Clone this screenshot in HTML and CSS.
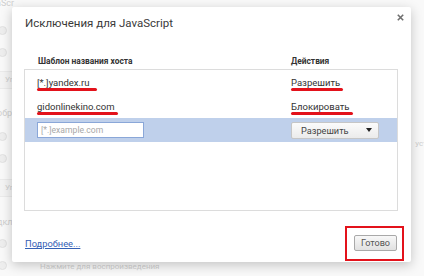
FILE: index.html
```html
<!DOCTYPE html>
<html lang="ru">
<head>
    <meta charset="UTF-8">
    <title>Исключения для JavaScript</title>
    <link rel="stylesheet" href="styles.css">
</head>
<body>
    <div class="page">
        <div class="page-col">
            <div class="page-item top">aScr</div>
            <div class="page-item"><span class="radio"></span></div>
            <div class="page-item"><span class="radio"></span></div>
            <div class="page-item btn-row"><span class="page-btn">Уг</span></div>
            <div class="page-item head">обр</div>
            <div class="page-item"><span class="radio"></span></div>
            <div class="page-item"><span class="radio"></span></div>
            <div class="page-item btn-row tall"><span class="page-btn">Уг</span></div>
            <div class="page-item head short">дкл</div>
            <div class="page-item"><span class="radio"></span></div>
            <div class="page-item"><span class="radio"></span><span class="page-text">Нажмите для воспроизведения</span></div>
        </div>
        <div class="page-side">уст</div>
    </div>

    <div class="dialog">
        <div class="dialog-header">
            <h1 class="dialog-title">Исключения для JavaScript</h1>
            <svg class="close" width="7" height="7" viewBox="0 0 7 7">
                <path d="M0.8 0.8 L6.2 6.2 M6.2 0.8 L0.8 6.2" stroke="#6f6f6f" stroke-width="1.6" fill="none"/>
            </svg>
        </div>

        <div class="columns">
            <div class="col-host">Шаблон названия хоста</div>
            <div class="col-action">Действия</div>
        </div>

        <div class="list">
            <div class="list-row">
                <div class="col-host"><span class="marked long">[*.]yandex.ru</span></div>
                <div class="col-action"><span class="marked">Разрешить</span></div>
            </div>
            <div class="list-row">
                <div class="col-host"><span class="marked">gidonlinekino.com</span></div>
                <div class="col-action"><span class="marked">Блокировать</span></div>
            </div>
            <div class="list-row selected">
                <div class="col-host"><input class="host-input" type="text" placeholder="[*.]example.com"></div>
                <div class="col-action">
                    <div class="select">
                        <span>Разрешить</span>
                        <svg width="6" height="4" viewBox="0 0 6 4"><path d="M0 0 H6 L3 4 Z" fill="#222"/></svg>
                    </div>
                </div>
            </div>
        </div>

        <div class="dialog-footer">
            <a href="#" class="more">Подробнее...</a>
            <div class="done-wrap">
                <button class="done">Готово</button>
            </div>
        </div>
    </div>
</body>
</html>
```

FILE: styles.css
```css
* {
    margin: 0;
    padding: 0;
    box-sizing: border-box;
}

body {
    width: 424px;
    height: 276px;
    overflow: hidden;
    background: #f9f9f9;
    font-family: Roboto, 'Noto Sans', sans-serif;
}

/* faded settings page behind the overlay */
.page {
    display: flex;
    justify-content: space-between;
    color: #cfcfcf;
    font-size: 8px;
}

.page-col {
    display: flex;
    flex-direction: column;
}

.page-item {
    height: 22px;
    display: flex;
    align-items: center;
    white-space: nowrap;
}

.page-item.top {
    height: 19px;
    align-items: flex-start;
    line-height: 6px;
    font-size: 9px;
    margin-left: -4px;
}

.page-item.btn-row {
    height: 34px;
}

.page-item.btn-row.tall {
    height: 38px;
}

.page-item.head {
    height: 28px;
    line-height: 32px;
    font-size: 9px;
    align-items: flex-start;
    margin-left: -3px;
}

.page-item.head.short {
    height: 25px;
    line-height: 30px;
}

.radio {
    width: 9px;
    height: 9px;
    border-radius: 50%;
    border: 1px solid #e2e2e2;
    background: #eeeeee;
    margin-left: -2px;
}

.page-btn {
    width: 14px;
    height: 18px;
    line-height: 16px;
    padding-left: 5px;
    border: 1px solid #ebebeb;
    border-left: none;
    background: #f4f4f4;
    overflow: hidden;
}

.page-text {
    margin-left: 33px;
    font-size: 8px;
    padding-top: 3px;
}

.page-side {
    margin-top: 139px;
    margin-right: -3px;
    font-size: 8px;
}

/* dialog */
.dialog {
    position: absolute;
    left: 12px;
    top: 7px;
    width: 399px;
    height: 255px;
    background: #fff;
    border-radius: 2px;
    box-shadow: 0 3px 12px rgba(0,0,0,0.22);
    padding: 0 13px 11px 12px;
    display: flex;
    flex-direction: column;
    color: #333;
}

.dialog-header {
    height: 47px;
    display: flex;
    justify-content: space-between;
    align-items: flex-start;
    padding-top: 9px;
    padding-left: 1px;
}

.dialog-title {
    font-size: 11.5px;
    font-weight: normal;
    line-height: 14px;
    color: #3a3a3a;
}

.close {
    margin-top: -2px;
    margin-right: -6px;
}

.columns {
    display: flex;
    height: 15px;
    line-height: 14px;
    font-size: 8.4px;
    font-weight: bold;
    padding-left: 14px;
    color: #333;
}

.col-host {
    width: 253px;
}

.col-action {
    flex: 1;
}

.list {
    height: 142px;
    border: 1px solid #dcdcdc;
    font-size: 9.5px;
}

.list-row {
    height: 24px;
    display: flex;
    align-items: center;
    padding-left: 12px;
    line-height: 11px;
}

.list-row .col-host {
    width: 254px;
}

.list-row.selected {
    background: #bfd0eb;
}

.marked {
    position: relative;
}

.marked::after {
    content: "";
    position: absolute;
    left: 0;
    right: -3px;
    bottom: -3px;
    height: 3px;
    border-radius: 2px;
    background: #e3121b;
}

.marked.long::after {
    right: -7px;
}

.host-input {
    width: 107px;
    height: 16px;
    border: 1px solid #8aa7d8;
    font-family: inherit;
    font-size: 8.6px;
    padding-left: 3px;
    outline: none;
    display: block;
}

.host-input::placeholder {
    color: #a8a8a8;
}

.select {
    width: 88px;
    height: 17px;
    border: 1px solid #c6c6c6;
    border-radius: 2px;
    background: linear-gradient(#fbfbfb, #ebebeb);
    display: flex;
    align-items: center;
    justify-content: space-between;
    padding: 0 6px 0 9px;
    font-size: 9.2px;
    color: #444;
}

.dialog-footer {
    flex: 1;
    display: flex;
    justify-content: space-between;
    align-items: flex-end;
    padding-left: 1px;
}

.more {
    font-size: 9.3px;
    line-height: 12px;
    color: #3560b5;
    margin-bottom: 1px;
}

.done-wrap {
    position: relative;
    margin-right: 1px;
}

.done-wrap::after {
    content: "";
    position: absolute;
    left: -9px;
    right: -7px;
    top: -9px;
    bottom: -10px;
    border: 2px solid #e3121b;
}

.done {
    display: block;
    width: 43px;
    height: 16px;
    font-family: inherit;
    font-size: 9.1px;
    color: #555;
    border: 1px solid #a9a9a9;
    border-radius: 2px;
    background: linear-gradient(#f8f8f8, #e1e1e1);
}
```
